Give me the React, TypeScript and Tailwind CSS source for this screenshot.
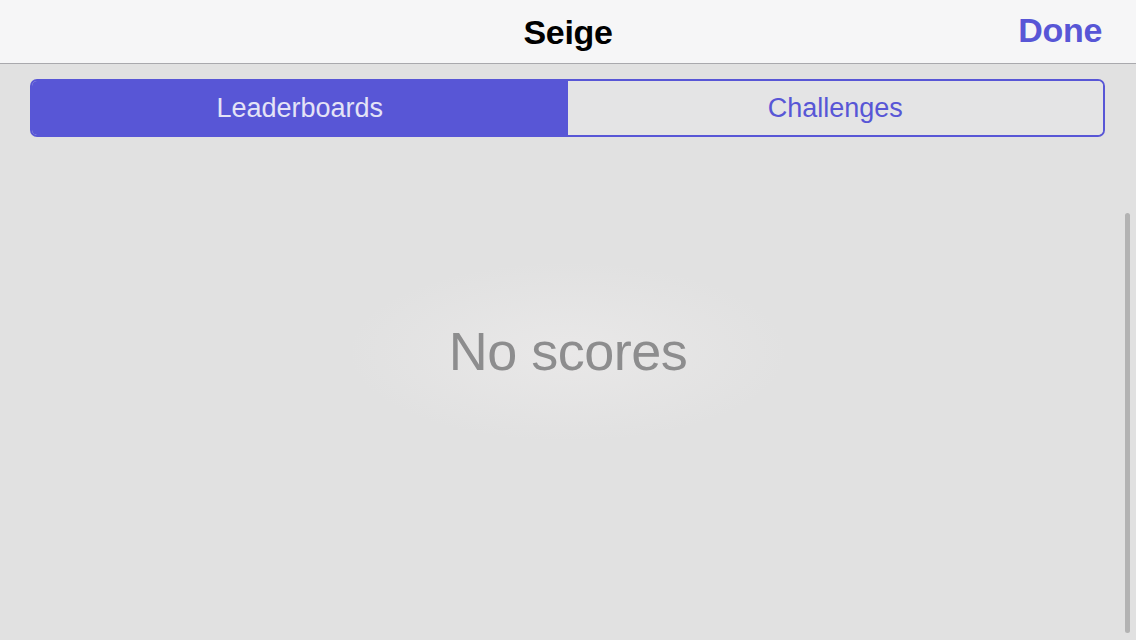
export default function App() {
  const font = { fontFamily: '"Liberation Sans", Arial, sans-serif' }

  return (
    <div className="h-[640px] w-[1136px] flex flex-col overflow-hidden bg-[#e1e1e1]" style={font}>
      {/* Nav bar */}
      <header className="h-16 shrink-0 relative flex items-center justify-center bg-[#f6f6f7] border-b border-[#a9a9ad]">
        <h1 className="text-[34px] font-bold text-black tracking-[-0.3px] leading-none">Seige</h1>
        <button className="absolute right-[34px] top-[13px] text-[34px] font-bold text-[#5856d6] tracking-[-0.3px] leading-none">
          Done
        </button>
      </header>

      {/* Content */}
      <main className="relative flex-1 flex flex-col bg-[radial-gradient(ellipse_220px_90px_at_568px_288px,#e9e8e8,transparent)]">
        <div className="mt-[15px] ml-[30px] mr-[31px] h-[58px] flex rounded-[7px] border-2 border-[#5856d6] overflow-hidden">
          <button className="flex-1 flex items-center justify-center bg-[#5856d6] text-[27px] text-[#e4e3f6]">
            Leaderboards
          </button>
          <button className="flex-1 flex items-center justify-center bg-[#e4e4e5] text-[27px] text-[#5856d6]">
            Challenges
          </button>
        </div>

        <div className="flex-1 flex items-center justify-center pb-[74px]">
          <p className="text-[54px] text-[#8d8d8e] tracking-[-0.5px]">No scores</p>
        </div>

        {/* scroll indicator */}
        <div className="absolute left-[1125px] top-[149px] w-[5px] h-[420px] rounded-full bg-[#b3b3b3]" />
      </main>
    </div>
  )
}
